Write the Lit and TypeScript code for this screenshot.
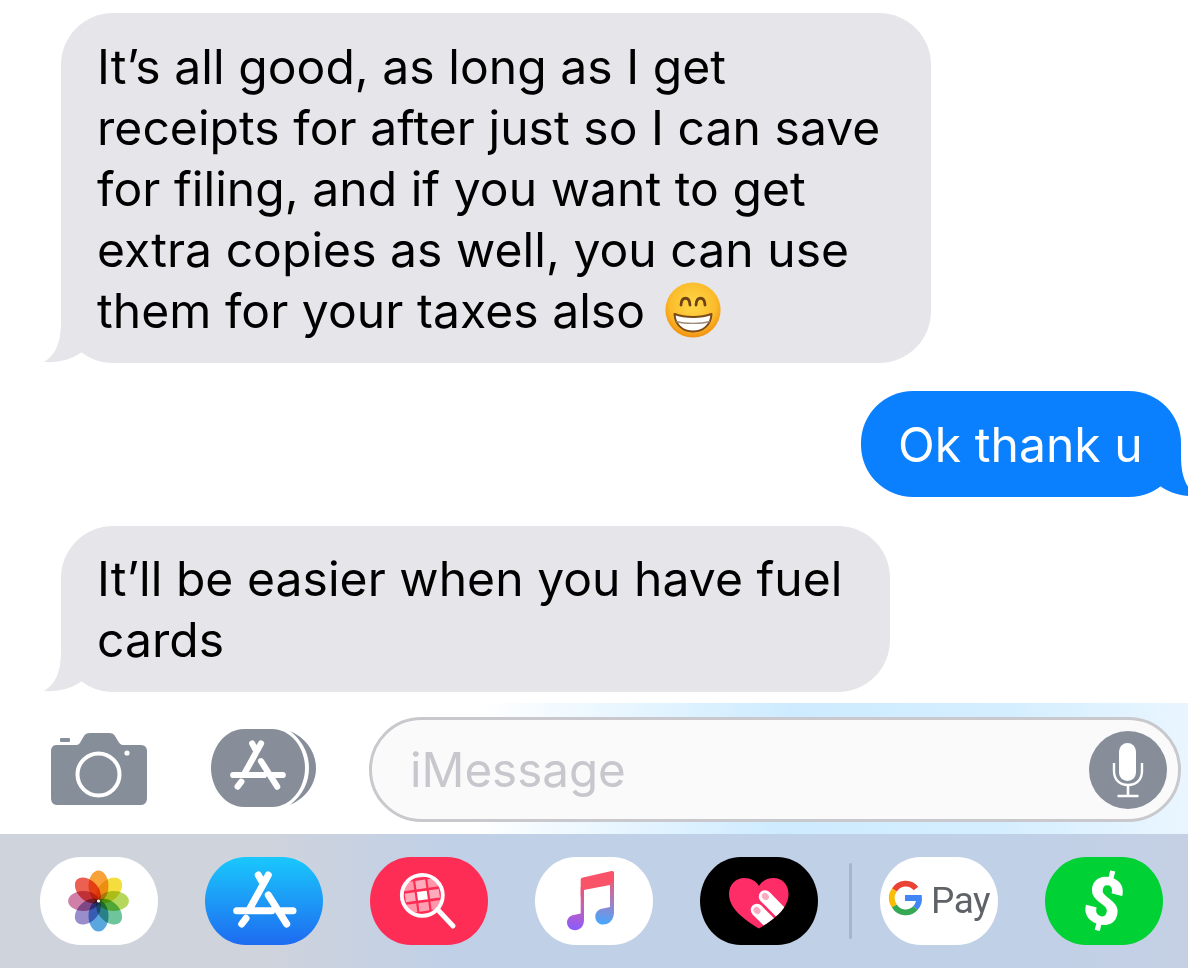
import { LitElement, html, css, svg } from "lit";
import { customElement } from "lit/decorators.js";

const SHAPE = "M41 0H77C101 0 118 21 118 44C118 67 101 88 77 88H41C17 88 0 67 0 44C0 21 17 0 41 0Z";

const appGlyph = (t: string, color: string) => svg`
  <g transform=${t} stroke=${color} stroke-width="7" stroke-linecap="round" fill="none">
    <path d="M63.3 18L45 51.3M41 61.3L36.7 67M31.7 53.7H66.7M76.7 53.7H88M53.3 18L58.3 27M63.3 38L81.7 67"/>
  </g>`;

const PETALS = ["#f7a33a", "#f3de3e", "#b5d85c", "#6fc59b", "#5aa7e0", "#9a8dcb", "#d080a8", "#ec6052"];

const tailLeft = () => svg`<svg class="tail tail-l" width="70" height="54" viewBox="0 0 70 54"><path d="M18 0V13C18 33 13 46 1 53C17 54 29 50 39 43C47 50 57 53 69 53V0Z" fill="#e5e5ea"/></svg>`;

@customElement("app-root")
export class AppRoot extends LitElement {
  static styles = css`
    :host {
      display: block;
      width: 1188px;
      height: 968px;
      overflow: hidden;
      background: #fff;
      font-family: Inter, "Liberation Sans", sans-serif;
    }
    .page { display: flex; flex-direction: column; height: 968px; }
    .thread { display: flex; flex-direction: column; height: 703px; padding-top: 13px; box-sizing: border-box; }
    .bubble {
      position: relative;
      isolation: isolate;
      box-sizing: border-box;
      font-size: 48px;
      line-height: 61px;
      letter-spacing: 0.06px;
      padding: 23px 36px;
      border-radius: 52px;
    }
    .in { background: #e5e5ea; color: #000; margin-left: 61px; }
    .out { background: #0b80fe; color: #fff; align-self: flex-end; margin: 28px 7px 29px 0; width: 320px; height: 106px; padding-left: 37px; }
    .first { width: 870px; height: 350px; }
    .third { width: 829px; height: 166px; padding-top: 22px; }
    .tail { position: absolute; bottom: 0; z-index: -1; }
    .tail-l { left: -18px; }
    .tail-r { right: -18px; }
    .emoji { display: inline-block; width: 56px; height: 56px; vertical-align: -10px; margin-left: 20px; }
    .bar {
      height: 131px;
      display: flex;
      align-items: center;
      box-sizing: border-box;
      padding: 0 7px 0 51px;
      background: linear-gradient(95deg, #fff 0, #fff 40%, #cdebff 66%, #d4eeff 84%, #eaf6ff 100%);
    }
    .camera { width: 96px; height: 72px; flex: none; }
    .apps { width: 106px; height: 80px; margin: -2px 0 0 64px; flex: none; }
    .field {
      flex: 1;
      margin: 2px 0 0 52px;
      height: 105px;
      box-sizing: border-box;
      border: 3px solid #c8c8cd;
      border-radius: 53px;
      background: #fafafa;
      display: flex;
      align-items: center;
      justify-content: space-between;
      padding: 0 11px 0 38px;
    }
    .placeholder { font-size: 47.5px; color: #c7c7cd; }
    .mic { width: 78px; height: 78px; flex: none; }
    .tray {
      height: 134px;
      display: flex;
      align-items: flex-start;
      box-sizing: border-box;
      padding: 23px 0 0 40px;
      gap: 47px;
      background: linear-gradient(90deg, #cfd3dc 0, #cfd3dc 22%, #c0d0e7 38%, #c0d0e7 85%, #c5d0e4 100%);
    }
    .tile { width: 118px; height: 88px; flex: none; }
    .divider { width: 3px; height: 76px; margin: 6px -19px 0 -16px; background: #a6b5cd; border-radius: 2px; flex: none; }
    .pay { font-family: Roboto, sans-serif; font-size: 37px; fill: #5f6368; letter-spacing: -0.5px; }
    .dollar { font-family: Roboto, sans-serif; font-size: 66px; font-weight: 900; fill: #fff; }
    .petal { mix-blend-mode: multiply; }
    .flower { isolation: isolate; }
  `;

  private tile(inner: unknown) {
    return html`<svg class="tile" viewBox="0 0 118 88">${inner}</svg>`;
  }

  private photos() {
    return svg`<path d=${SHAPE} fill="#fff"/>
      <g class="flower">
        ${PETALS.map((c, i) => svg`<ellipse class="petal" cx="58.5" cy="29" rx="10" ry="15.4" fill=${c} transform="rotate(${i * 45} 58.5 44)"/>`)}
      </g>
      <circle cx="58.5" cy="44" r="1.6" fill="#fff"/>`;
  }

  private store() {
    return svg`<defs><linearGradient id="sg" x1="0" y1="0" x2="0" y2="1"><stop offset="0" stop-color="#1ac8fc"/><stop offset="1" stop-color="#1e6bf0"/></linearGradient></defs>
      <path d=${SHAPE} fill="url(#sg)"/>${appGlyph("", "#fff")}`;
  }

  private search() {
    const ops = [
      [.25, .35, .45, .35, .25],
      [.35, .5, .6, .5, .35],
      [.45, .6, 1, .6, .45],
      [.35, .5, .55, .5, .35],
      [.25, .35, .45, .35, .25],
    ];
    return svg`<defs><clipPath id="gc"><circle cx="52.3" cy="38.3" r="20"/></clipPath></defs>
      <path d=${SHAPE} fill="#fe2d55"/>
      <g clip-path="url(#gc)"><g transform="rotate(-8 52.3 38.3)">
        ${ops.map((row, r) => row.map((o, c) => svg`<rect x=${47.3 + (c - 2) * 12.2} y=${34.3 + (r - 2) * 11.2} width="10" height="8.6" fill="#fff" opacity=${o}/>`))}
      </g></g>
      <circle cx="52.3" cy="38.3" r="20.5" fill="none" stroke="#fff" stroke-width="3.8"/>
      <path d="M68 53L83 69" stroke="#fff" stroke-width="5" stroke-linecap="round"/>`;
  }

  private music() {
    return svg`<defs>
        <linearGradient id="ml" gradientUnits="userSpaceOnUse" x1="47" y1="22" x2="40" y2="73"><stop offset="0" stop-color="#fa4d62"/><stop offset=".5" stop-color="#c95fb0"/><stop offset="1" stop-color="#8a5cff"/></linearGradient>
        <linearGradient id="mr" gradientUnits="userSpaceOnUse" x1="77" y1="18" x2="68" y2="68"><stop offset="0" stop-color="#f7536a"/><stop offset=".5" stop-color="#a77cc0"/><stop offset="1" stop-color="#42a9ff"/></linearGradient>
      </defs>
      <path d=${SHAPE} fill="#fff"/>
      <path d="M45.7 23C45.7 21.5 46.5 20.8 48 20.5L76.5 14C78 13.7 79 14.4 79 16V33H75V28L48.8 33L45.7 40Z" fill="#f9536a"/>
      <rect x="75" y="26" width="4" height="30" fill="url(#mr)"/>
      <path d="M79 30V55C79 63 74 67.5 68.3 67.5C63.5 67.5 60.3 64 60.3 59.7C60.3 55 64 52 68 51.6L75 50V30Z" fill="url(#mr)"/>
      <path d="M49 30V63C49 69 45 73.3 40 73.3C35.5 73.3 32 70 32 65.6C32 61 35.5 58.3 40 57.8L45.7 56.5V30Z" fill="url(#ml)"/>`;
  }

  private heart() {
    return svg`<defs><clipPath id="hc"><path d="M59 71.5C45 63 29 52 29 37C29 27.5 36 21 44 21C51 21 56 24 59 29C62 24 67 21 74 21C82 21 88.5 27.5 88.5 37C88.5 52 73 63 59 71.5Z"/></clipPath></defs>
      <path d=${SHAPE} fill="#000"/>
      <g clip-path="url(#hc)">
        <rect x="20" y="15" width="80" height="65" fill="#fe2d68"/>
        <path d="M65 39.5L92 67" stroke="#fff" stroke-width="12.5" stroke-linecap="round"/>
        <path d="M57 53L80 76" stroke="#fff" stroke-width="12.5" stroke-linecap="round"/>
      </g>
      <ellipse cx="65.4" cy="39.5" rx="3.8" ry="3.2" fill="#f9a9c0" transform="rotate(45 65.4 39.5)"/>
      <ellipse cx="57" cy="53.5" rx="3.8" ry="3.2" fill="#f9a9c0" transform="rotate(45 57 53.5)"/>`;
  }

  private gpay() {
    return svg`<path d=${SHAPE} fill="#fff"/>
      <g fill="none" stroke-width="5.8">
        <path d="M36 31.5A13.2 13.2 0 0 0 14.4 33" stroke="#ea4335"/>
        <path d="M14.4 33A13.2 13.2 0 0 0 14.4 49" stroke="#fbbc04"/>
        <path d="M14.4 49A13.2 13.2 0 0 0 35.5 51" stroke="#34a853"/>
        <path d="M35.5 51A13.2 13.2 0 0 0 39 41H25" stroke="#4285f4"/>
      </g>
      <text class="pay" x="51" y="56">Pay</text>`;
  }

  private cash() {
    return svg`<path d=${SHAPE} fill="#00d135"/>
      <text class="dollar" x="59" y="67" text-anchor="middle" transform="rotate(14 59 44)">$</text>`;
  }

  render() {
    return html`<div class="page">
      <div class="thread">
        <div class="bubble in first">
          It’s all good, as long as I get<br />receipts for after just so I can save<br />for filing, and if you want to get<br />extra copies as well, you can use<br />them for your taxes also<svg class="emoji" viewBox="0 0 56 56">
            <defs>
              <radialGradient id="eg" cx=".5" cy=".4" r=".6"><stop offset="0" stop-color="#ffd84a"/><stop offset=".7" stop-color="#fbbb2a"/><stop offset="1" stop-color="#f2900f"/></radialGradient>
            </defs>
            <circle cx="28" cy="28" r="27.6" fill="url(#eg)"/>
            <path d="M16 23C16.5 14 24.5 14 25 23M31 23C31.5 14 39.5 14 40 23" fill="none" stroke="#6e4313" stroke-width="2.8" stroke-linecap="round"/>
            <path d="M9.5 32C20 36 36 36 46.5 32C46 43 38 49.5 28 49.5C18 49.5 10 43 9.5 32Z" fill="#fff" stroke="#7a4a18" stroke-width="2" stroke-linejoin="round"/>
            <path d="M11 39.5C20 42 36 42 45 39.5" fill="none" stroke="#9b8a78" stroke-width="1.4"/>
          </svg>
          <svg class="tail tail-l" width="70" height="54" viewBox="0 0 70 54"><path d="M18 0V13C18 33 13 46 1 53C17 54 29 50 39 43C47 50 57 53 69 53V0Z" fill="#e5e5ea"/></svg>
        </div>
        <div class="bubble out">
          Ok thank u
          <svg class="tail tail-r" width="70" height="54" viewBox="0 0 70 54"><path d="M52 0V13C52 33 57 46 69 53C53 54 41 50 31 43C23 50 13 53 1 53V0Z" fill="#0b80fe"/></svg>
        </div>
        <div class="bubble in third">
          It’ll be easier when you have fuel<br />cards
          <svg class="tail tail-l" width="70" height="54" viewBox="0 0 70 54"><path d="M18 0V13C18 33 13 46 1 53C17 54 29 50 39 43C47 50 57 53 69 53V0Z" fill="#e5e5ea"/></svg>
        </div>
      </div>
      <div class="bar">
        <svg class="camera" viewBox="0 0 96 72">
          <path d="M5 12H25C28 12 29 10 30 8L33 3C34 1 36 0 39 0H58C61 0 63 1 64 3L67 8C68 10 70 12 72 12H90C94 12 96 15 96 18V65C96 69 94 72 90 72H6C2 72 0 69 0 65V18C0 15 2 12 5 12Z" fill="#868e9a"/>
          <rect x="9" y="5" width="10" height="4" rx="1" fill="#868e9a"/>
          <circle cx="47.5" cy="41.5" r="21" fill="none" stroke="#fff" stroke-width="4"/>
          <circle cx="76" cy="20" r="2.6" fill="#fff"/>
        </svg>
        <svg class="apps" viewBox="0 0 106 80">
          <path d="M33 1H61C80 1 94 20 94 40C94 60 80 79 61 79H33C14 79 0 60 0 40C0 20 14 1 33 1Z" fill="#878e99"/>
          <path d="M79 3C95 10 105 24 105 40C105 56 95 70 79 77C92 67 98 54 98 40C98 26 92 13 79 3Z" fill="#878e99"/>
          ${appGlyph("translate(-5.7 -0.3) scale(.88)", "#fff")}
        </svg>
        <div class="field">
          <span class="placeholder">iMessage</span>
          <svg class="mic" viewBox="0 0 78 78">
            <circle cx="39" cy="39" r="39" fill="#878e99"/>
            <rect x="30" y="12" width="17" height="38" rx="8.5" fill="#fff"/>
            <path d="M25 32V40C25 49 31 54 39 54C47 54 53 49 53 40V32" fill="none" stroke="#fff" stroke-width="2.4"/>
            <path d="M39 54V65M28.5 65H49.5" fill="none" stroke="#fff" stroke-width="2.6"/>
          </svg>
        </div>
      </div>
      <div class="tray">
        ${this.tile(this.photos())}
        ${this.tile(this.store())}
        ${this.tile(this.search())}
        ${this.tile(this.music())}
        ${this.tile(this.heart())}
        <div class="divider"></div>
        ${this.tile(this.gpay())}
        ${this.tile(this.cash())}
      </div>
    </div>`;
  }
}
